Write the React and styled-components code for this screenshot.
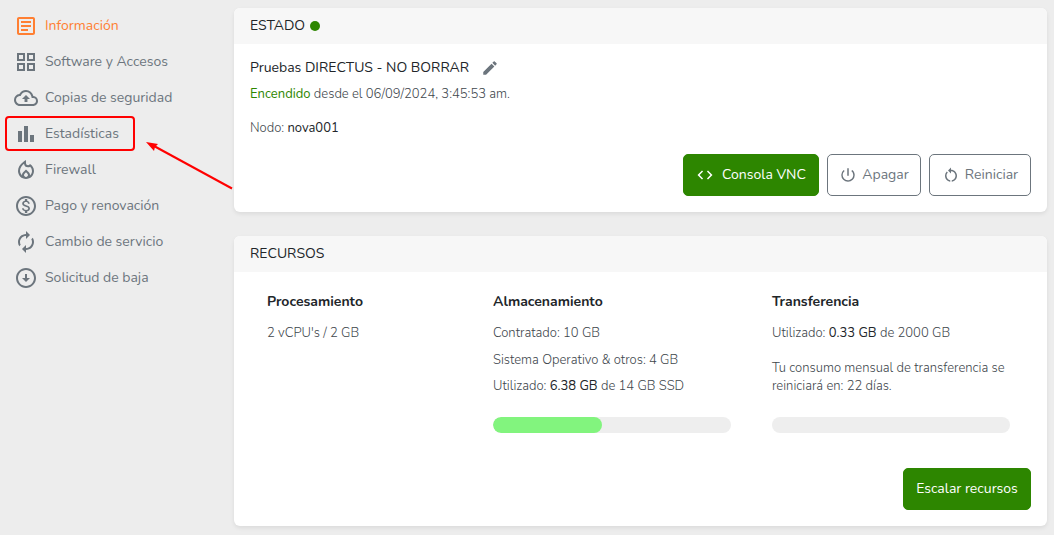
import React from "react";
import styled, { createGlobalStyle } from "styled-components";
import {
  MdOutlineArticle,
  MdOutlineGridView,
  MdOutlineBackup,
  MdBarChart,
  MdOutlineLocalFireDepartment,
  MdOutlineMonetizationOn,
  MdAutorenew,
  MdOutlineArrowCircleDown,
  MdEdit,
  MdCode,
  MdPowerSettingsNew,
  MdRestartAlt,
} from "react-icons/md";

const GlobalStyle = createGlobalStyle`
  *, *::before, *::after { box-sizing: border-box; }
  body {
    margin: 0;
    background: #ededed;
    color: #212529;
    font-family: Nunito, Lato, "Open Sans", sans-serif;
    font-size: 14px;
    line-height: 20px;
  }
  h2, h3, p { margin: 0; }
`;

const Page = styled.div`
  display: grid;
  grid-template-columns: 226px minmax(0, 1fr);
  gap: 8px;
  padding: 8px 7px 8px 0;
`;

const SideNav = styled.nav`
  position: relative;
`;

const NavList = styled.ul`
  list-style: none;
  margin: 0;
  padding: 0 0 0 14px;
`;

const NavLink = styled.a`
  display: flex;
  align-items: center;
  gap: 7px;
  height: 36px;
  color: ${({ $active }) => ($active ? "#ff7f32" : "#6c757d")};
  text-decoration: none;
  svg { width: 24px; height: 24px; flex: none; }
`;

const Highlight = styled.div`
  position: absolute;
  top: 108px;
  left: 5px;
  width: 130px;
  height: 35px;
  border: 2px solid #f00;
  border-radius: 4px;
`;

const Arrow = styled.svg`
  position: absolute;
  top: 130px;
  left: 144px;
`;

const Content = styled.main`
  display: flex;
  flex-direction: column;
  gap: 24px;
`;

const Card = styled.section`
  background: #fff;
  border-radius: 6px;
  overflow: hidden;
  box-shadow: 0 2px 4px rgba(0, 0, 0, 0.08);
`;

const CardHeader = styled.h2`
  display: flex;
  align-items: center;
  gap: 5px;
  height: 36px;
  padding: 0 16px;
  background: #f7f7f7;
  font-size: 14px;
  font-weight: 400;
`;

const StatusDot = styled.span`
  width: 10px;
  height: 10px;
  border-radius: 50%;
  background: #2d8600;
`;

const CardBody = styled.div`
  padding: 14px 16px 16px;
`;

const NameRow = styled.div`
  display: flex;
  align-items: center;
  gap: 12px;
`;

const EditButton = styled.button`
  display: flex;
  padding: 0;
  border: 0;
  background: none;
  color: #6c757d;
  svg { width: 18px; height: 18px; }
`;

const Detail = styled.p`
  font-size: 13px;
  line-height: 18px;
  font-weight: 300;
  color: #40464c;
  margin-top: ${({ $gap }) => $gap || 0}px;
`;

const Value = styled.strong`
  font-weight: 400;
  color: ${({ $on }) => ($on ? "#2d8600" : "#212529")};
`;

const Actions = styled.div`
  display: flex;
  justify-content: flex-end;
  gap: 8px;
  margin-top: ${({ $gap }) => $gap}px;
`;

const Button = styled.button`
  display: flex;
  align-items: center;
  justify-content: center;
  gap: ${({ $primary }) => ($primary ? 8 : 5)}px;
  height: 42px;
  width: ${({ $width }) => $width}px;
  padding: 0;
  border: 1px solid ${({ $primary }) => ($primary ? "#2d8600" : "#6c757d")};
  border-radius: 5px;
  background: ${({ $primary }) => ($primary ? "#2d8600" : "#fff")};
  color: ${({ $primary }) => ($primary ? "#fff" : "#6c757d")};
  font: inherit;
  svg { width: 18px; height: 18px; }
`;

const Resources = styled.div`
  display: grid;
  grid-template-columns: 226fr 279fr 259fr;
  padding: 6px 0 0 17px;
`;

const Resource = styled.div`
  display: flex;
  flex-direction: column;
  min-width: 0;
`;

const ResourceTitle = styled.h3`
  font-size: 14px;
  font-weight: 700;
  margin-bottom: 12px;
`;

const Meter = styled.div`
  width: 238px;
  height: 16px;
  margin-top: 22px;
  border-radius: 8px;
  background: #eee;
  overflow: hidden;
`;

const MeterFill = styled.div`
  height: 100%;
  border-radius: 8px;
  background: #82f47e;
`;

const navItems = [
  { label: "Información", icon: MdOutlineArticle, active: true },
  { label: "Software y Accesos", icon: MdOutlineGridView },
  { label: "Copias de seguridad", icon: MdOutlineBackup },
  { label: "Estadísticas", icon: MdBarChart },
  { label: "Firewall", icon: MdOutlineLocalFireDepartment },
  { label: "Pago y renovación", icon: MdOutlineMonetizationOn },
  { label: "Cambio de servicio", icon: MdAutorenew },
  { label: "Solicitud de baja", icon: MdOutlineArrowCircleDown },
];

function Usage({ label, percent }) {
  return (
    <Meter role="progressbar" aria-label={label} aria-valuenow={percent} aria-valuemin={0} aria-valuemax={100}>
      <MeterFill style={{ width: `${percent}%` }} />
    </Meter>
  );
}

export default function App() {
  return (
    <>
      <GlobalStyle />
      <Page>
        <SideNav aria-label="Servicio">
          <NavList>
            {navItems.map(({ label, icon: Icon, active }) => (
              <li key={label}>
                <NavLink href="#" $active={active}>
                  <Icon aria-hidden="true" />
                  {label}
                </NavLink>
              </li>
            ))}
          </NavList>
          <Highlight />
          <Arrow width="90" height="54" viewBox="0 0 90 54" aria-hidden="true">
            <path d="M88 50.500L10 8" stroke="#f00" strokeWidth="2" fill="none" />
            <path d="M2 4L14 6L11 9L10 13Z" fill="#f00" />
          </Arrow>
        </SideNav>

        <Content>
          <Card>
            <CardHeader>
              ESTADO <StatusDot />
            </CardHeader>
            <CardBody>
              <NameRow>
                Pruebas DIRECTUS - NO BORRAR
                <EditButton type="button" aria-label="Editar nombre">
                  <MdEdit />
                </EditButton>
              </NameRow>
              <Detail $gap={7}>
                <Value $on>Encendido</Value> desde el 06/09/2024, 3:45:53 am.
              </Detail>
              <Detail $gap={16}>
                Nodo: <Value>nova001</Value>
              </Detail>
              <Actions $gap={17}>
                <Button type="button" $primary $width={136}>
                  <MdCode /> Consola VNC
                </Button>
                <Button type="button" $width={94}>
                  <MdPowerSettingsNew /> Apagar
                </Button>
                <Button type="button" $width={102}>
                  <MdRestartAlt /> Reiniciar
                </Button>
              </Actions>
            </CardBody>
          </Card>

          <Card>
            <CardHeader>RECURSOS</CardHeader>
            <CardBody>
              <Resources>
                <Resource>
                  <ResourceTitle>Procesamiento</ResourceTitle>
                  <Detail>2 vCPU's / 2 GB</Detail>
                </Resource>
                <Resource>
                  <ResourceTitle>Almacenamiento</ResourceTitle>
                  <Detail>Contratado: 10 GB</Detail>
                  <Detail $gap={9}>Sistema Operativo &amp; otros: 4 GB</Detail>
                  <Detail $gap={8}>
                    Utilizado: <Value>6.38 GB</Value> de 14 GB SSD
                  </Detail>
                  <Usage label="Almacenamiento utilizado" percent={46} />
                </Resource>
                <Resource>
                  <ResourceTitle>Transferencia</ResourceTitle>
                  <Detail>
                    Utilizado: <Value>0.33 GB</Value> de 2000 GB
                  </Detail>
                  <Detail $gap={17}>
                    Tu consumo mensual de transferencia se reiniciará en: 22 días.
                  </Detail>
                  <Usage label="Transferencia utilizada" percent={0} />
                </Resource>
              </Resources>
              <Actions $gap={35}>
                <Button type="button" $primary $width={128}>
                  Escalar recursos
                </Button>
              </Actions>
            </CardBody>
          </Card>
        </Content>
      </Page>
    </>
  );
}
